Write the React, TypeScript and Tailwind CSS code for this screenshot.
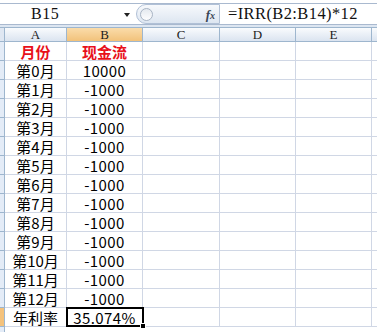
import React from "react"

const cols = ["A", "B", "C", "D", "E"]

const rows: { a: string; b: string; title?: boolean }[] = [
  { a: "月份", b: "现金流", title: true },
  { a: "第0月", b: "10000" },
  ...Array.from({ length: 12 }, (_, i) => ({ a: `第${i + 1}月`, b: "-1000" })),
  { a: "年利率", b: "35.074%" },
]

const cjk = "font-['Noto_Sans_CJK_SC',sans-serif]"

const FormulaBar = () => {
  return (
    <div className="pt-[3px] bg-white">
      <div className="h-[22px] border-t border-b border-[#a9b9cf] flex items-center bg-white">
        <div className="w-[136px] h-full flex items-center relative">
          <span className="pl-[31px] font-['Liberation_Serif',serif] text-[16px] tracking-[0.5px] text-[#111] leading-none">B15</span>
          <svg className="absolute left-[124px] top-[9px]" width="6" height="4" viewBox="0 0 6 4">
            <polygon points="0,0 6,0 3,4" fill="#222" />
          </svg>
        </div>
        <div className="w-[84px] h-[20px] rounded-l-full border border-[#b0c0d6] bg-linear-to-b from-[#f7f9fc] to-[#dde6f1] flex items-center justify-between pl-[3px] pr-[4px]">
          <div className="w-[13px] h-[13px] rounded-full border border-[#a8b4c4] bg-linear-to-b from-[#e4e9ef] to-[#fdfdfe]" />
          <span className="font-['Liberation_Serif',serif] italic font-bold text-[13px] text-[#3a4656] leading-none">
            f<span className="text-[10px]">x</span>
          </span>
        </div>
        <span className="pl-[8px] font-['Liberation_Serif',serif] text-[16.5px] tracking-[0.4px] text-[#111] leading-none">=IRR(B2:B14)*12</span>
      </div>
      <div className="h-[2px] bg-[#dde6f1]" />
    </div>
  )
}

const Sheet = () => {
  return (
    <div className="grid grid-cols-[5px_62px_76px_77px_76px_76px_5px] grid-rows-[15px_repeat(16,19px)]">
      <div className="border-r border-b border-t border-[#9eb6ce] bg-[#dfe7f2]" />
      {cols.map((c) => (
        <div
          key={c}
          className={
            "border-r border-b border-t border-[#9eb6ce] flex items-center justify-center font-['Liberation_Serif',serif] text-[13px] text-[#1c1c1c] leading-none " +
            (c === "B" ? "bg-linear-to-b from-[#fadcaa] to-[#f2c27a]" : "bg-linear-to-b from-[#f9fbfd] to-[#dbe4f0]")
          }
        >
          {c}
        </div>
      ))}
      <div className="border-t border-b border-[#9eb6ce] bg-linear-to-b from-[#f9fbfd] to-[#dbe4f0]" />

      {rows.map((r, i) => {
        const last = i === rows.length - 1
        return (
          <React.Fragment key={i}>
            <div className={"border-r border-b border-[#9eb6ce] " + (last ? "bg-[#f4c27c]" : "bg-[#e4ecf7]")} />
            <div className={`border-r border-b border-[#d0d7e5] flex items-center justify-center text-[15px] leading-none ${cjk} ` + (r.title ? "font-bold text-[#e8101a]" : "text-black")}>
              {r.a}
            </div>
            <div className={`relative border-r border-b border-[#d0d7e5] flex items-center justify-center text-[15px] leading-none ${cjk} ` + (r.title ? "font-bold text-[#e8101a]" : "text-black tracking-[0.4px]")}>
              {r.b}
              {last && (
                <>
                  <div className="absolute -left-[1px] -top-[1px] -right-[2px] -bottom-[1px] border-2 border-black" />
                  <div className="absolute -right-[4px] -bottom-[3px] w-[6px] h-[6px] bg-black border border-white" />
                </>
              )}
            </div>
            <div className="border-r border-b border-[#d0d7e5]" />
            <div className="border-r border-b border-[#d0d7e5]" />
            <div className="border-r border-b border-[#d0d7e5]" />
            <div className="border-b border-[#d0d7e5]" />
          </React.Fragment>
        )
      })}
      <div className="border-r border-[#9eb6ce] bg-[#e4ecf7]" />
    </div>
  )
}

export default function App() {
  return (
    <div className="w-[377px] h-[332px] overflow-hidden bg-white">
      <FormulaBar />
      <Sheet />
    </div>
  )
}
